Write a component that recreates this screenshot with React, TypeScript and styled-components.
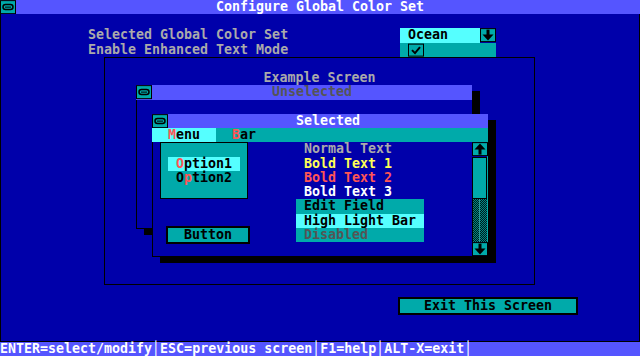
import styled, { createGlobalStyle } from 'styled-components';

const RH = 14.24;

const GlobalStyle = createGlobalStyle`
  html, body { margin: 0; padding: 0; background: #0000aa; }
`;

const Screen = styled.div`
  width: 640px;
  height: 356px;
  display: flex;
  flex-direction: column;
  overflow: hidden;
  background: #0000aa;
  color: #aaaaaa;
  font-family: "DejaVu Sans Mono", "Liberation Mono", monospace;
  font-size: 13.3px;
  font-weight: bold;
  line-height: ${RH}px;
  white-space: pre;
`;

const TitleBar = styled.div`
  height: ${RH}px;
  display: flex;
  background: #5555ff;
  color: #ffffff;
`;

const TitleText = styled.div<{ $center?: boolean; $dim?: boolean }>`
  flex: 1;
  text-align: center;
  margin-right: ${(p) => (p.$center ? '16px' : '0')};
  color: ${(p) => (p.$dim ? '#555555' : '#ffffff')};
`;

const Desk = styled.main`
  flex: 1;
  display: flex;
  flex-direction: column;
  border: 1px solid #000;
  border-top: none;
`;

const Form = styled.div`
  margin: ${RH}px 0 0 87px;
  display: grid;
  grid-template-columns: 312px 96px;
  grid-auto-rows: ${RH}px;
`;

const Select = styled.div`
  display: flex;
`;

const SelectValue = styled.div`
  width: 72px;
  padding-left: 8px;
  background: #55ffff;
  color: #000;
`;

const CheckCell = styled.div`
  display: flex;
  padding-left: 8px;
  background: #00aaaa;
`;

const Frame = styled.section`
  position: relative;
  box-sizing: border-box;
  margin-left: 103px;
  width: 431px;
  height: 228px;
  border: 1px solid #000;
`;

const Caption = styled.div`
  padding-top: 13.24px;
  height: ${RH}px;
  text-align: center;
`;

const Window = styled.div<{ $left: number; $top: number }>`
  position: absolute;
  left: ${(p) => p.$left}px;
  top: ${(p) => p.$top}px;
  width: 336px;
  display: flex;
  flex-direction: column;
  background: #0000aa;
  box-shadow: 8px 6px 0 #000;
`;

const WinBody = styled.div`
  height: ${RH * 9}px;
  border-left: 1px solid #000;
  border-bottom: 1px solid #000;
`;

const MenuBar = styled.div`
  height: ${RH}px;
  display: flex;
  background: #00aaaa;
  color: #000;
`;

const MenuItem = styled.div<{ $active?: boolean }>`
  width: 48px;
  padding-left: 16px;
  background: ${(p) => (p.$active ? '#55ffff' : 'transparent')};
`;

const Hot = styled.span`
  color: #ff5555;
`;

const SelBody = styled.div`
  display: grid;
  grid-template-columns: 143px 128px 48px 16px;
  grid-template-rows: repeat(8, ${RH}px);
  border-left: 1px solid #000;
  border-bottom: 1px solid #000;
`;

const ListRow = styled.div<{ $fg: string; $bg?: string }>`
  grid-column: 2;
  padding-left: 8px;
  color: ${(p) => p.$fg};
  background: ${(p) => p.$bg || 'transparent'};
`;

const Button = styled.div`
  grid-column: 1;
  grid-row: 7;
  margin: 0.5px 0 0 15px;
  width: 80px;
  height: 14px;
  line-height: 14px;
  text-align: center;
  background: #00aaaa;
  color: #000;
  box-shadow: 0 0 0 2px #000;
`;

const Popup = styled.div`
  position: absolute;
  left: 8px;
  top: ${RH * 2}px;
  box-sizing: border-box;
  width: 88px;
  height: ${RH * 4}px;
  padding: ${RH - 1}px 0 0 7px;
  border: 1px solid #000;
  background: #00aaaa;
  color: #000;
`;

const PopupItem = styled.div<{ $active?: boolean }>`
  width: 64px;
  padding-left: 8px;
  background: ${(p) => (p.$active ? '#55ffff' : 'transparent')};
`;

const Scrollbar = styled.div`
  grid-column: 4;
  grid-row: 1 / span 8;
  display: flex;
  flex-direction: column;
  border-right: 1px solid #00aaaa;
`;

const Thumb = styled.div`
  box-sizing: border-box;
  height: ${RH * 3}px;
  background: #00aaaa;
  border: 1px solid #000;
`;

const Track = styled.div`
  height: ${RH * 3}px;
  background:
    linear-gradient(#2a9a9a, #2a9a9a) 7px 0 / 1px 100% no-repeat,
    repeating-conic-gradient(#008888 0 25%, #001818 0 50%) 0 0 / 2px 2px;
  box-shadow: inset 1px 0 0 #000;
`;

const ExitButton = styled.div`
  margin: 14.08px 0 0 399px;
  width: 176px;
  height: ${RH}px;
  text-align: center;
  background: #00aaaa;
  color: #000;
  box-shadow: 0 0 0 2px #000;
`;

const StatusBar = styled.footer`
  height: ${RH}px;
  background: #5555ff;
  color: #ffffff;
`;

const Cell = styled.svg`
  display: block;
  flex: none;
`;

const CloseIcon = () => (
  <Cell width="16" height={RH} viewBox="0 0 16 14">
    <rect x="0.5" y="0.5" width="15" height="13" fill="#00aaaa" stroke="#000" />
    <rect x="3" y="4.5" width="10" height="5" rx="2.5" fill="none" stroke="#000" strokeWidth="1.5" />
    <line x1="5" y1="7" x2="11" y2="7" stroke="#000" strokeWidth="1" />
  </Cell>
);

const ArrowIcon = ({ up }: { up?: boolean }) => (
  <Cell width="16" height={RH} viewBox="0 0 16 14">
    <rect x="0.5" y="0.5" width="15" height="13" fill="#00aaaa" stroke="#000" />
    <g transform={up ? 'rotate(180 8 7)' : undefined}>
      <rect x="6.5" y="1.5" width="3" height="7" fill="#000" />
      <polygon points="2.5,6.5 13.5,6.5 8,12.5" fill="#000" />
    </g>
  </Cell>
);

const CheckIcon = () => (
  <Cell width="16" height={RH} viewBox="0 0 16 14">
    <rect x="0.5" y="1" width="15" height="12" fill="#00aaaa" stroke="#000" />
    <path d="M4 7 L7 10 L12 4" fill="none" stroke="#000" strokeWidth="2" />
  </Cell>
);

const App = () => (
  <>
    <GlobalStyle />
    <Screen>
      <TitleBar>
        <CloseIcon />
        <TitleText $center>Configure Global Color Set</TitleText>
      </TitleBar>

      <Desk>
        <Form>
          <div>Selected Global Color Set</div>
          <Select>
            <SelectValue>Ocean</SelectValue>
            <ArrowIcon />
          </Select>
          <div>Enable Enhanced Text Mode</div>
          <CheckCell>
            <CheckIcon />
          </CheckCell>
        </Form>

        <Frame>
          <Caption>Example Screen</Caption>

          <Window $left={31} $top={27.48}>
            <TitleBar>
              <CloseIcon />
              <TitleText $dim>Unselected</TitleText>
            </TitleBar>
            <WinBody />
          </Window>

          <Window $left={47} $top={55.96}>
            <TitleBar>
              <CloseIcon />
              <TitleText>Selected</TitleText>
            </TitleBar>
            <MenuBar>
              <MenuItem $active><Hot>M</Hot>enu</MenuItem>
              <MenuItem><Hot>B</Hot>ar</MenuItem>
            </MenuBar>
            <SelBody>
              <ListRow $fg="#aaaaaa">Normal Text</ListRow>
              <ListRow $fg="#ffff55">Bold Text 1</ListRow>
              <ListRow $fg="#ff5555">Bold Text 2</ListRow>
              <ListRow $fg="#ffffff">Bold Text 3</ListRow>
              <ListRow $fg="#000000" $bg="#00aaaa">Edit Field</ListRow>
              <ListRow $fg="#000000" $bg="#55ffff">High Light Bar</ListRow>
              <ListRow $fg="#555555" $bg="#00aaaa">Disabled</ListRow>
              <Button>Button</Button>
              <Scrollbar>
                <ArrowIcon up />
                <Thumb />
                <Track />
                <ArrowIcon />
              </Scrollbar>
            </SelBody>
            <Popup>
              <PopupItem $active><Hot>O</Hot>ption1</PopupItem>
              <PopupItem>O<Hot>p</Hot>tion2</PopupItem>
            </Popup>
          </Window>
        </Frame>

        <ExitButton>Exit This Screen</ExitButton>
      </Desk>

      <StatusBar>ENTER=select/modify│ESC=previous screen│F1=help│ALT-X=exit│</StatusBar>
    </Screen>
  </>
);

export default App;
